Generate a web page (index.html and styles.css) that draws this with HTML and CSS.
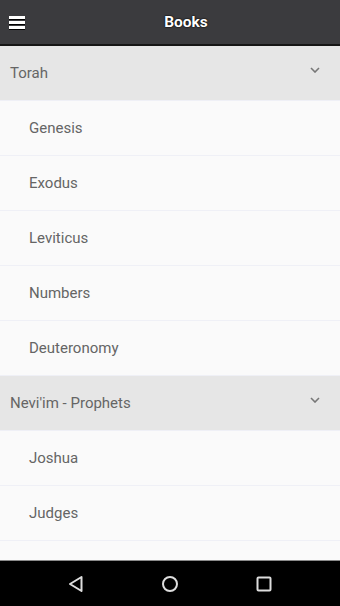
FILE: index.html
```html
<!DOCTYPE html>
<html>
<head>
<meta charset="utf-8">
<link rel="stylesheet" href="styles.css">
</head>
<body>
<div class="app">
  <header class="topbar">
    <svg class="menu" width="16" height="15" viewBox="0 0 16 15">
      <rect x="0" y="1" width="16" height="3" fill="#fff"/>
      <rect x="0" y="6" width="16" height="3" fill="#fff"/>
      <rect x="0" y="11" width="16" height="3" fill="#fff"/>
    </svg>
    <div class="title">Books</div>
  </header>
  <div class="list">
    <div class="row section"><span>Torah</span>
      <svg class="chev" width="10" height="6" viewBox="0 0 10 6"><path d="M1 1 L5 5 L9 1" fill="none" stroke="#777" stroke-width="1.6"/></svg>
    </div>
    <div class="row item">Genesis</div>
    <div class="row item">Exodus</div>
    <div class="row item">Leviticus</div>
    <div class="row item">Numbers</div>
    <div class="row item">Deuteronomy</div>
    <div class="row section"><span>Nevi'im - Prophets</span>
      <svg class="chev" width="10" height="6" viewBox="0 0 10 6"><path d="M1 1 L5 5 L9 1" fill="none" stroke="#777" stroke-width="1.6"/></svg>
    </div>
    <div class="row item">Joshua</div>
    <div class="row item">Judges</div>
    <div class="row item"></div>
  </div>
  <nav class="navbar">
    <svg width="18" height="18" viewBox="0 0 18 18"><path d="M14.5 2 L3 9 L14.5 16 Z" fill="none" stroke="#ddd" stroke-width="2" stroke-linejoin="round"/></svg>
    <svg width="18" height="18" viewBox="0 0 18 18"><circle cx="9" cy="9" r="7" fill="none" stroke="#ddd" stroke-width="2"/></svg>
    <svg width="18" height="18" viewBox="0 0 18 18"><rect x="2.5" y="2.5" width="13" height="13" rx="1" fill="none" stroke="#ddd" stroke-width="2"/></svg>
  </nav>
</div>
</body>
</html>
```
FILE: styles.css
```css
html, body {
  margin: 0;
  padding: 0;
}
body {
  font-family: Roboto, "Liberation Sans", sans-serif;
  background: #fafafa;
}
.app {
  width: 340px;
  height: 606px;
  display: flex;
  flex-direction: column;
  overflow: hidden;
}
.topbar {
  height: 44px;
  background: #3b3b3e;
  border-bottom: 2px solid #151515;
  display: flex;
  align-items: center;
  padding-left: 9px;
  flex-shrink: 0;
}
.menu {
  filter: drop-shadow(0 1px 0 #000);
}
.title {
  flex: 1;
  text-align: center;
  color: #fff;
  font-weight: bold;
  font-size: 15.5px;
  padding-left: 7px;
  text-shadow: 0 0 2px #000, 0 0 1px #000;
}
.list {
  flex: 1;
  overflow: hidden;
}
.row {
  height: 54px;
  border-bottom: 1px solid #eff0f6;
  display: flex;
  align-items: center;
  font-size: 15px;
  color: #656565;
}
.section {
  background: #e6e6e6;
  padding-left: 10px;
  padding-right: 20px;
  justify-content: space-between;
}
.chev {
  margin-top: -6px;
}
.item {
  background: #fafafa;
  padding-left: 29px;
}
.navbar {
  height: 45px;
  border-top: 1px solid #8a8a8a;
  background: #000;
  flex-shrink: 0;
  display: flex;
  align-items: center;
  justify-content: center;
  gap: 76px;
}
```
